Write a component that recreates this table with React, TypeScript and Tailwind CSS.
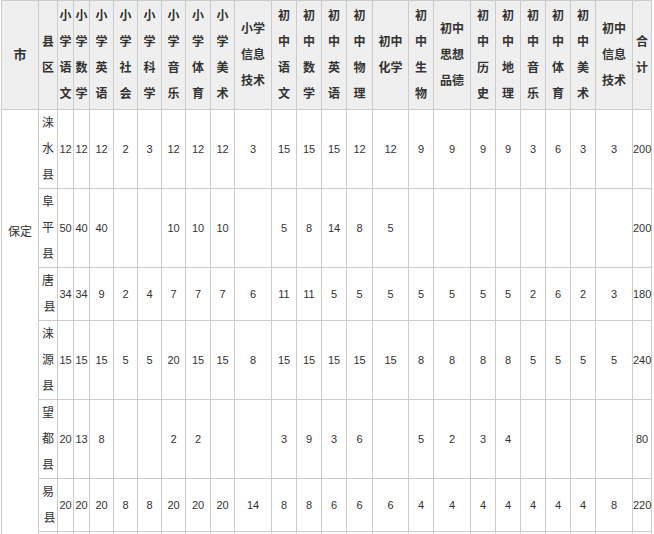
const widths = [
  "w-[37px]", "w-[19px]", "w-[16px]", "w-[16px]", "w-[24px]", "w-[24px]", "w-[24px]", "w-[24px]",
  "w-[25px]", "w-[24px]", "w-[37px]", "w-[25px]", "w-[25px]", "w-[25px]", "w-[26px]", "w-[36px]",
  "w-[25px]", "w-[37px]", "w-[25px]", "w-[25px]", "w-[25px]", "w-[25px]", "w-[25px]", "w-[37px]",
  "w-[19px]",
];

const headers = [
  "县区", "小学语文", "小学数学", "小学英语", "小学社会", "小学科学", "小学音乐", "小学体育", "小学美术",
  "小学信息技术", "初中语文", "初中数学", "初中英语", "初中物理", "初中化学", "初中生物", "初中思想品德",
  "初中历史", "初中地理", "初中音乐", "初中体育", "初中美术", "初中信息技术", "合计",
];

interface Row {
  county: string[];
  values: string[];
}

const rows: Row[] = [
  { county: ["涞", "水", "县"], values: "12 12 12 2 3 12 12 12 3 15 15 15 12 12 9 9 9 9 3 6 3 3 200".split(" ") },
  { county: ["阜", "平", "县"], values: "50 40 40 - - 10 10 10 - 5 8 14 8 5 - - - - - - - - 200".split(" ") },
  { county: ["唐", "县"], values: "34 34 9 2 4 7 7 7 6 11 11 5 5 5 5 5 5 5 2 6 2 3 180".split(" ") },
  { county: ["涞", "源", "县"], values: "15 15 15 5 5 20 15 15 8 15 15 15 15 15 8 8 8 8 5 5 5 5 240".split(" ") },
  { county: ["望", "都", "县"], values: "20 13 8 - - 2 2 - - 3 9 3 6 - 5 2 3 4 - - - - 80".split(" ") },
  { county: ["易", "县"], values: "20 20 20 8 8 20 20 20 14 8 8 6 6 6 4 4 4 4 4 4 4 8 220".split(" ") },
];

const cell = "border border-[#cccccc] p-0 px-px text-center align-middle leading-[26px]";

export default function App() {
  return (
    <div className="bg-white min-h-screen pl-px font-['Liberation_Sans','Noto_Sans_CJK_SC',sans-serif] text-[12px] text-[#333333] overflow-hidden">
      <table className="table-fixed border-collapse w-[650px]">
        <colgroup>
          {widths.map((w, i) => (
            <col key={i} className={w} />
          ))}
        </colgroup>
        <thead>
          <tr className="h-[109px] bg-[#efefef]">
            <th className={`${cell} font-bold text-[13px]`}>市</th>
            {headers.map((h) => (
              <th key={h} className={`${cell} font-bold text-[#333333]`}>
                {h}
              </th>
            ))}
          </tr>
        </thead>
        <tbody>
          {rows.map((row, ri) => (
            <tr key={ri}>
              {ri === 0 && (
                <td rowSpan={7} className={`${cell} !align-top pt-[109px]`}>
                  保定
                </td>
              )}
              <td className={cell}>
                {row.county.map((c, ci) => (
                  <span
                    key={ci}
                    className={row.county.length === 2 && ci === 1 ? "block pl-[3px]" : "block"}
                  >
                    {c}
                  </span>
                ))}
              </td>
              {row.values.map((v, vi) => (
                <td
                  key={vi}
                  className={`${cell} text-[11px] ${vi === row.values.length - 1 ? "!px-0 text-[10.5px]" : ""}`}
                >
                  {v === "-" ? "" : v}
                </td>
              ))}
            </tr>
          ))}
          <tr className="h-[79px]">
            {Array.from({ length: 24 }).map((_, i) => (
              <td key={i} className={cell}></td>
            ))}
          </tr>
        </tbody>
      </table>
    </div>
  );
}
